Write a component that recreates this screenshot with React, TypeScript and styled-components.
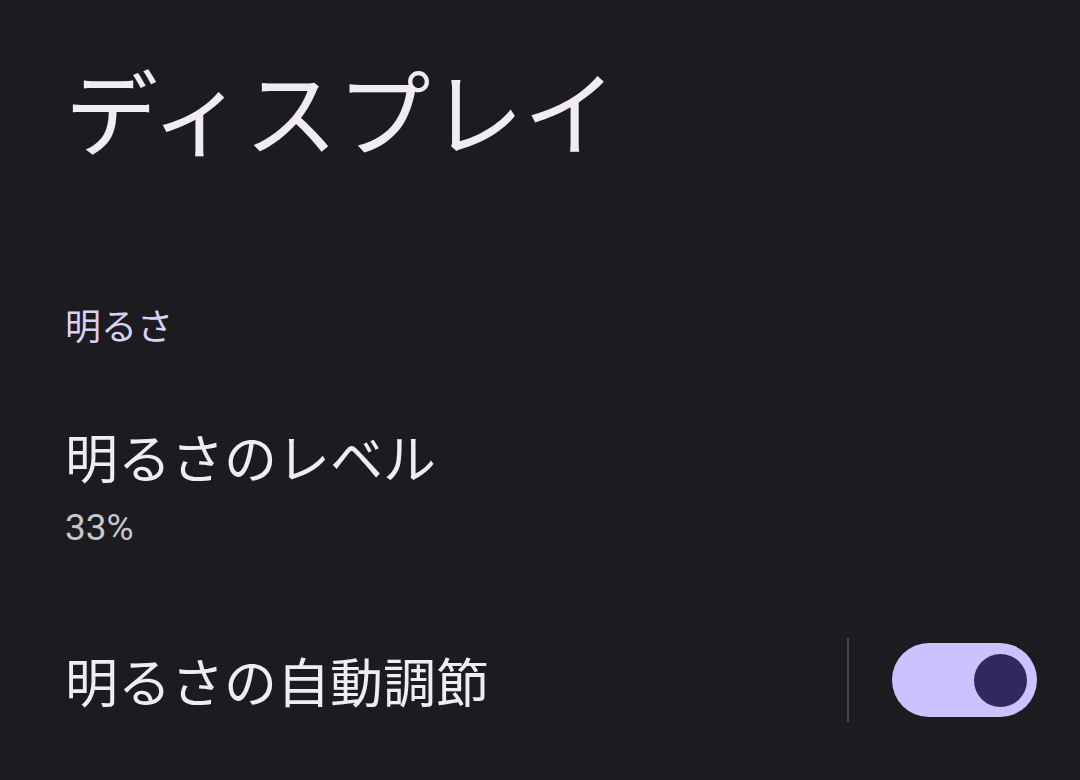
import React from 'react';
import styled, { createGlobalStyle } from 'styled-components';

const GlobalStyle = createGlobalStyle`
    html, body {
        margin: 0;
        padding: 0;
        background: #1c1b20;
    }
`;

const Screen = styled.div`
    width: 1080px;
    height: 780px;
    box-sizing: border-box;
    padding: 0 43px 0 65px;
    background: #1c1b20;
    display: flex;
    flex-direction: column;
    overflow: hidden;
    font-family: 'Noto Sans CJK JP', 'Noto Sans', sans-serif;
`;

const PageTitle = styled.h1`
    margin: 62px 0 0;
    font-size: 93px;
    line-height: 1;
    font-weight: 400;
    color: #f1ebf3;
`;

const CategoryTitle = styled.div`
    margin-top: 151px;
    font-size: 36px;
    line-height: 1;
    color: #d9d0f3;
`;

const Preference = styled.div<{ gap: number }>`
    margin-top: ${({ gap }) => gap}px;
    display: flex;
    align-items: center;
`;

const TextBlock = styled.div`
    flex: 1;
    display: flex;
    flex-direction: column;
`;

const PrefTitle = styled.div`
    font-size: 53px;
    line-height: 1;
    color: #f1ebf3;
`;

const Summary = styled.div`
    margin-top: 26px;
    font-family: Roboto, 'Noto Sans', sans-serif;
    font-size: 37px;
    line-height: 1;
    color: #c9c5cc;
`;

const Divider = styled.div`
    width: 2px;
    height: 84px;
    margin-right: 43px;
    background: #48464e;
`;

const Track = styled.div<{ on: boolean }>`
    width: 145px;
    height: 74px;
    box-sizing: border-box;
    border-radius: 37px;
    background: ${({ on }) => (on ? '#ccc2ff' : '#36343b')};
    display: flex;
    align-items: center;
    justify-content: ${({ on }) => (on ? 'flex-end' : 'flex-start')};
    padding: 0 10px;
`;

const Thumb = styled.div`
    width: 53px;
    height: 53px;
    border-radius: 50%;
    background: #33285d;
`;

const Switch: React.FC<{ on: boolean }> = ({ on }) => (
    <Track on={on}>
        <Thumb />
    </Track>
);

export default function App() {
    return (
        <>
            <GlobalStyle />
            <Screen>
                <PageTitle>ディスプレイ</PageTitle>
                <CategoryTitle>明るさ</CategoryTitle>
                <Preference gap={88}>
                    <TextBlock>
                        <PrefTitle>明るさのレベル</PrefTitle>
                        <Summary>33%</Summary>
                    </TextBlock>
                </Preference>
                <Preference gap={92}>
                    <TextBlock>
                        <PrefTitle>明るさの自動調節</PrefTitle>
                    </TextBlock>
                    <Divider />
                    <Switch on />
                </Preference>
            </Screen>
        </>
    );
}
